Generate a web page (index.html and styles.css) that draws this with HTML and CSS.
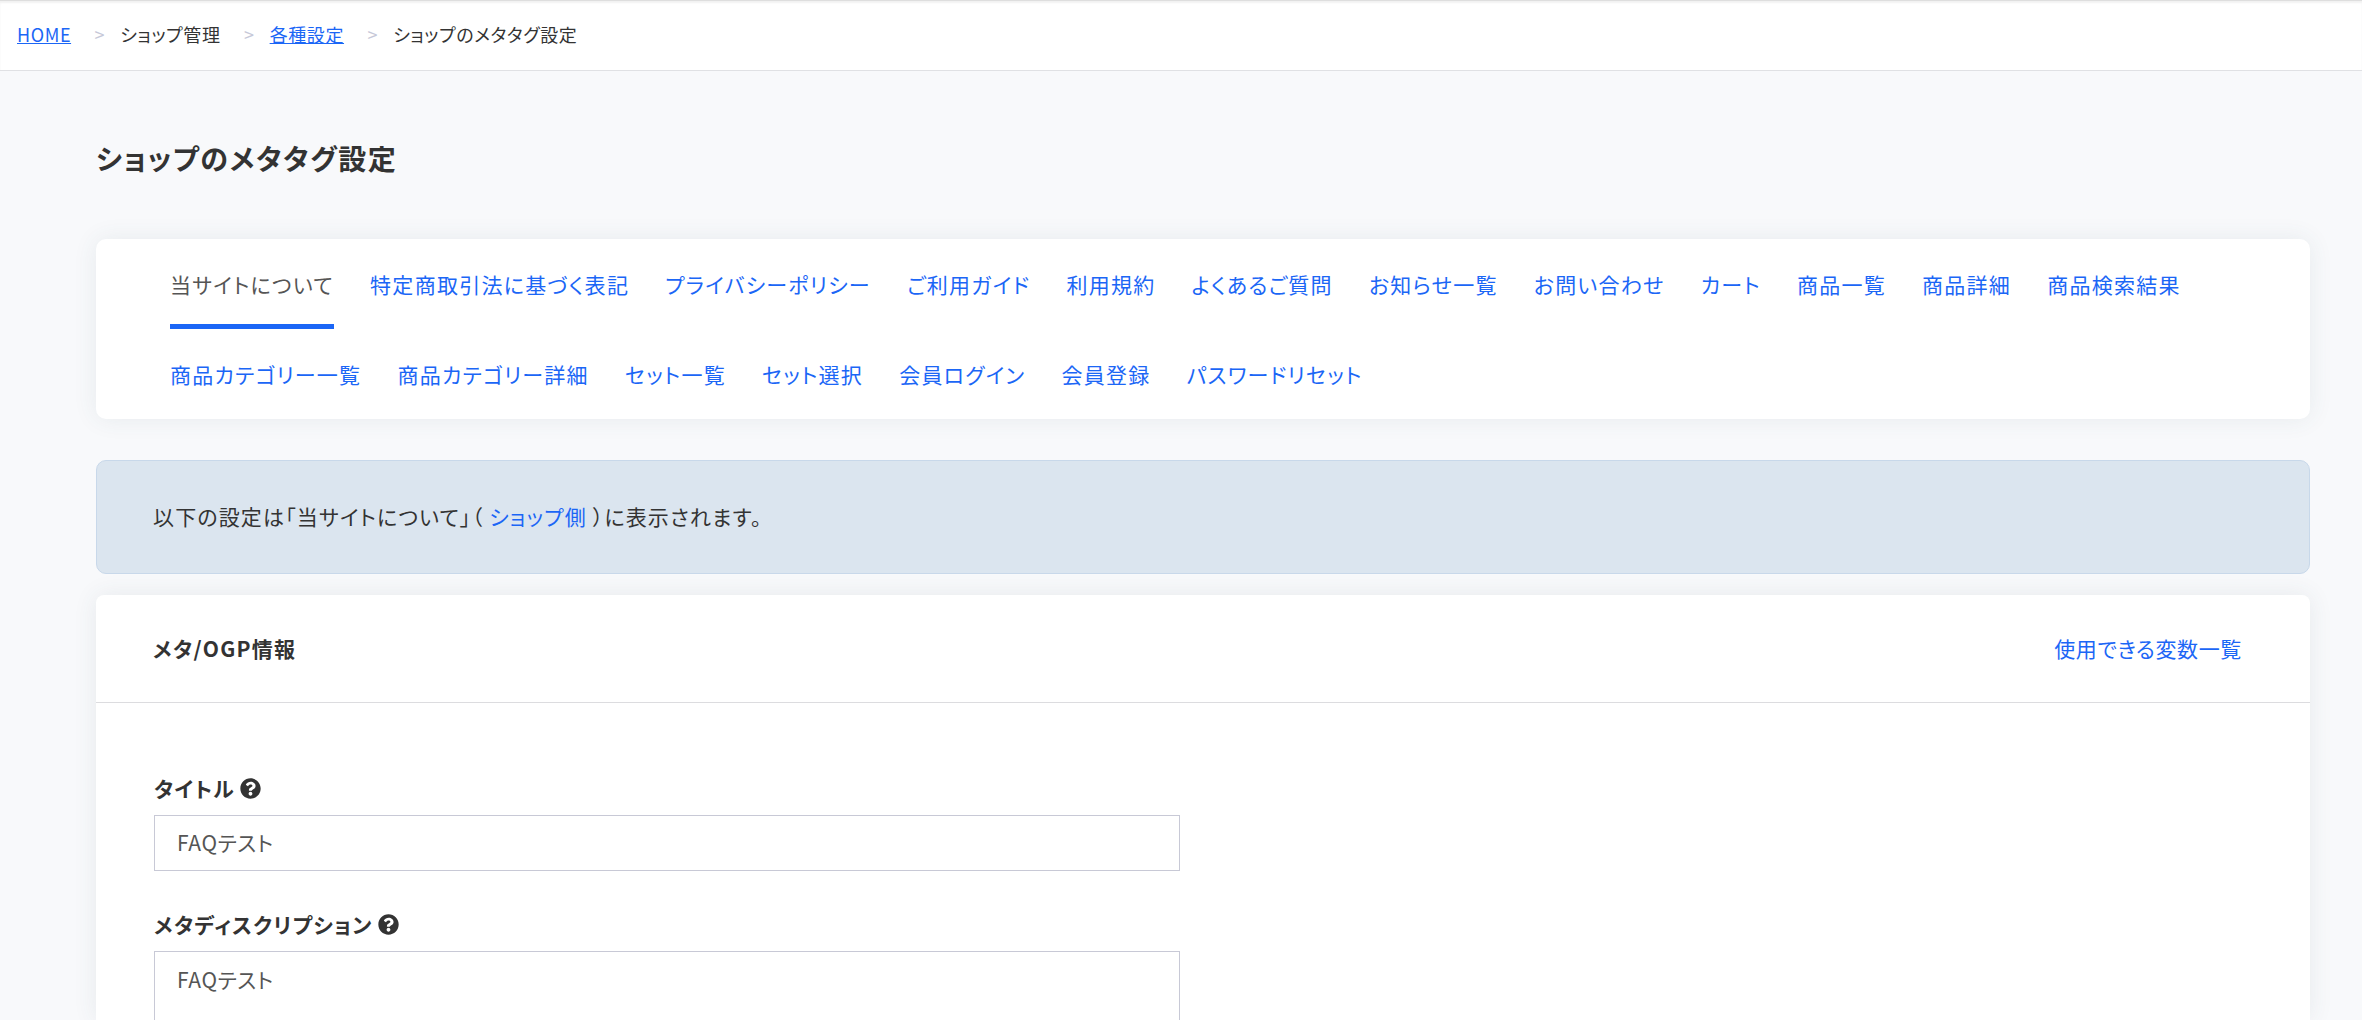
FILE: index.html
```
<!DOCTYPE html>
<html lang="ja">
<head>
  <meta charset="UTF-8">
  <title>ショップのメタタグ設定</title>
  <link rel="stylesheet" href="styles.css">
</head>
<body>
  <ol class="breadcrumb">
    <li><a href="#">HOME</a></li>
    <li>ショップ管理</li>
    <li><a href="#">各種設定</a></li>
    <li>ショップのメタタグ設定</li>
  </ol>

  <main class="container">
    <h1>ショップのメタタグ設定</h1>

    <nav class="tabs">
      <a class="active" href="#">当サイトについて</a>
      <a href="#">特定商取引法に基づく表記</a>
      <a href="#">プライバシーポリシー</a>
      <a href="#">ご利用ガイド</a>
      <a href="#">利用規約</a>
      <a href="#">よくあるご質問</a>
      <a href="#">お知らせ一覧</a>
      <a href="#">お問い合わせ</a>
      <a href="#">カート</a>
      <a href="#">商品一覧</a>
      <a href="#">商品詳細</a>
      <a href="#">商品検索結果</a>
      <a href="#">商品カテゴリー一覧</a>
      <a href="#">商品カテゴリー詳細</a>
      <a href="#">セット一覧</a>
      <a href="#">セット選択</a>
      <a href="#">会員ログイン</a>
      <a href="#">会員登録</a>
      <a href="#">パスワードリセット</a>
    </nav>

    <div class="alert">以下の設定は「当サイトについて」（ <a href="#">ショップ側</a> ）に表示されます。</div>

    <section class="card">
      <div class="card-header">
        <h2>メタ/OGP情報</h2>
        <a href="#">使用できる変数一覧</a>
      </div>
      <form class="card-body">
        <label for="title">タイトル
          <svg class="help" viewBox="0 0 512 512"><path d="M504 256c0 137-111 248-248 248S8 393 8 256 119 8 256 8s248 111 248 248zM262.700 90c-54.500 0-89.300 23-116.500 63.800-3.500 5.300-2.400 12.400 2.700 16.300l34.700 26.300c5.200 3.900 12.600 3 16.700-2.100 17.900-22.700 30.100-35.800 57.300-35.800 20.400 0 45.700 13.100 45.700 33 0 15-12.400 22.700-32.500 34C247.100 238.500 216 254.900 216 296v4c0 6.600 5.400 12 12 12h56c6.600 0 12-5.400 12-12v-1.300c0-28.500 83.200-29.600 83.200-106.700 0-58-60.200-102-116.500-102zM256 338c-25.400 0-46 20.600-46 46s20.600 46 46 46 46-20.600 46-46-20.600-46-46-46z"/></svg>
        </label>
        <input type="text" id="title" value="FAQテスト">

        <label for="description">メタディスクリプション
          <svg class="help" viewBox="0 0 512 512"><path d="M504 256c0 137-111 248-248 248S8 393 8 256 119 8 256 8s248 111 248 248zM262.700 90c-54.500 0-89.300 23-116.500 63.800-3.500 5.300-2.400 12.400 2.700 16.300l34.700 26.300c5.200 3.900 12.600 3 16.700-2.100 17.900-22.700 30.100-35.800 57.300-35.800 20.400 0 45.700 13.100 45.700 33 0 15-12.400 22.700-32.500 34C247.100 238.500 216 254.900 216 296v4c0 6.600 5.400 12 12 12h56c6.600 0 12-5.400 12-12v-1.300c0-28.500 83.200-29.600 83.200-106.700 0-58-60.200-102-116.500-102zM256 338c-25.400 0-46 20.600-46 46s20.600 46 46 46 46-20.600 46-46-20.600-46-46-46z"/></svg>
        </label>
        <textarea id="description">FAQテスト</textarea>
      </form>
    </section>
  </main>
</body>
</html>
```
FILE: styles.css
```
* {
  box-sizing: border-box;
}
body {
  margin: 0;
  height: 1020px;
  overflow: hidden;
  background: #f8f9fb;
  color: #333;
  font-family: "Noto Sans CJK JP", sans-serif;
  font-size: 21px;
  line-height: 32px;
  letter-spacing: 0.06em;
  font-feature-settings: "palt";
}
a {
  color: #1b66f6;
  text-decoration: none;
}
.breadcrumb {
  display: flex;
  height: 71px;
  margin: 0;
  padding: 0 17px 3px;
  align-items: center;
  list-style: none;
  background: #fff;
  border-top: 1px solid #dedede;
  border-bottom: 1px solid #e0e1e4;
  box-shadow: inset 0 2px 2px #f2f2f2;
  font-size: 18px;
  letter-spacing: 0.6px;
}
.breadcrumb a {
  text-decoration: underline;
}
.breadcrumb li + li::before {
  content: ">";
  margin: 0 15px 0 23.5px;
  color: #c6c8d8;
}
.container {
  padding: 67px 52px 0 96px;
}
h1 {
  margin: 0 0 61px;
  font-size: 28px;
  line-height: 40px;
  letter-spacing: 0.055em;
}
.tabs {
  display: flex;
  flex-wrap: wrap;
  height: 180px;
  margin-bottom: 41px;
  padding: 0 74px;
  column-gap: 36.1px;
  background: #fff;
  border-radius: 10px;
  box-shadow: 0 0 24px rgba(60, 90, 100, 0.09);
}
.tabs a {
  height: 90px;
  padding-top: 29px;
}
.tabs .active {
  color: #555;
  border-bottom: 5px solid #1b66f6;
}
.alert {
  height: 114px;
  margin-bottom: 21px;
  padding: 39px 56px;
  background: #dbe5ef;
  border: 1px solid #c8d8ea;
  border-radius: 10px;
  letter-spacing: 0.055em;
}
.card {
  height: 425px;
  background: #fff;
  border-radius: 8px 8px 0 0;
  box-shadow: 0 0 24px rgba(60, 80, 90, 0.09);
}
.card-header {
  display: flex;
  height: 108px;
  padding: 0 68px 2px 57px;
  align-items: center;
  justify-content: space-between;
  border-bottom: 1px solid #dcdcdf;
}
.card-header a {
  letter-spacing: 0.03em;
}
h2 {
  margin: 0;
  font-size: 21px;
}
.card-body {
  padding: 69px 58px 0;
}
label {
  display: flex;
  align-items: center;
  gap: 5px;
  margin-bottom: 11px;
  font-weight: bold;
}
.help {
  width: 21px;
  height: 21px;
  fill: #333;
}
input, textarea {
  display: block;
  width: 1026px;
  height: 56px;
  margin: 0 0 37px;
  padding: 10px 22px 12px;
  border: 1px solid #c8c9d6;
  border-radius: 0;
  background: #fff;
  color: #555;
  font: inherit;
  font-feature-settings: "palt";
  letter-spacing: 0.03em;
  resize: none;
}
textarea {
  height: 69px;
  margin: 0;
  padding-top: 11px;
  border-bottom: 0;
}
```
